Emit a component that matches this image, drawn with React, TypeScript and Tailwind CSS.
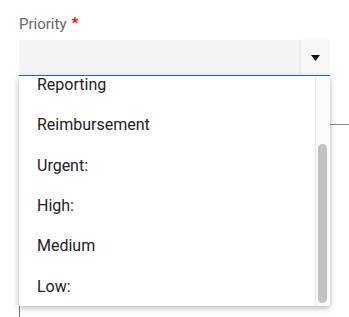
const OPTIONS = ["Reporting", "Reimbursement", "Urgent:", "High:", "Medium", "Low:"];

export default function App() {
  return (
    <div
      className="relative w-[349px] h-[317px] bg-white overflow-hidden"
      style={{ fontFamily: "Roboto, 'Liberation Sans', sans-serif" }}
    >
      {/* field underneath the open menu */}
      <div className="absolute left-[19px] top-[300px] w-px h-[20px] bg-[#777]" />
      <div className="absolute left-[330px] top-[124px] w-[19px] h-px bg-[#8a8a8a]" />

      <div className="pl-[19px] pt-[15px] w-[330px]">
        <label className="flex items-start text-[15px] leading-[18px] text-[#666]">
          Priority
          <span className="ml-[5px] text-[#f00] text-[15px] font-bold leading-[16px]">*</span>
        </label>

        {/* select */}
        <div className="mt-[7px] flex h-[36px] bg-[#f4f4f4] border-b border-[#1f6fc5]">
          <div className="flex-1" />
          <div className="w-[29px] flex items-center justify-center bg-[#f7f7f7] shadow-[-1px_0_2px_rgba(0,0,0,0.08)]">
            <svg width="9" height="6" viewBox="0 0 9 6">
              <path d="M0 0h9L4.5 6z" fill="#111" />
            </svg>
          </div>
        </div>

        {/* open menu */}
        <div className="relative h-[230px] bg-white overflow-hidden shadow-[0_2px_6px_rgba(0,0,0,0.3)] flex">
          <ul className="flex-1 -mt-[11px]">
            {OPTIONS.map((o) => (
              <li key={o} className="h-[40.33px] flex items-center pl-[18px] text-[16px] text-[#222]">
                {o}
              </li>
            ))}
          </ul>
          <div className="w-[15px] bg-[#fafafa] border-l border-[#e6e6e6] relative">
            <div className="absolute left-[2px] top-[68px] w-[9px] h-[159px] rounded-full bg-[#c2c2c2]" />
          </div>
        </div>
      </div>
    </div>
  );
}
